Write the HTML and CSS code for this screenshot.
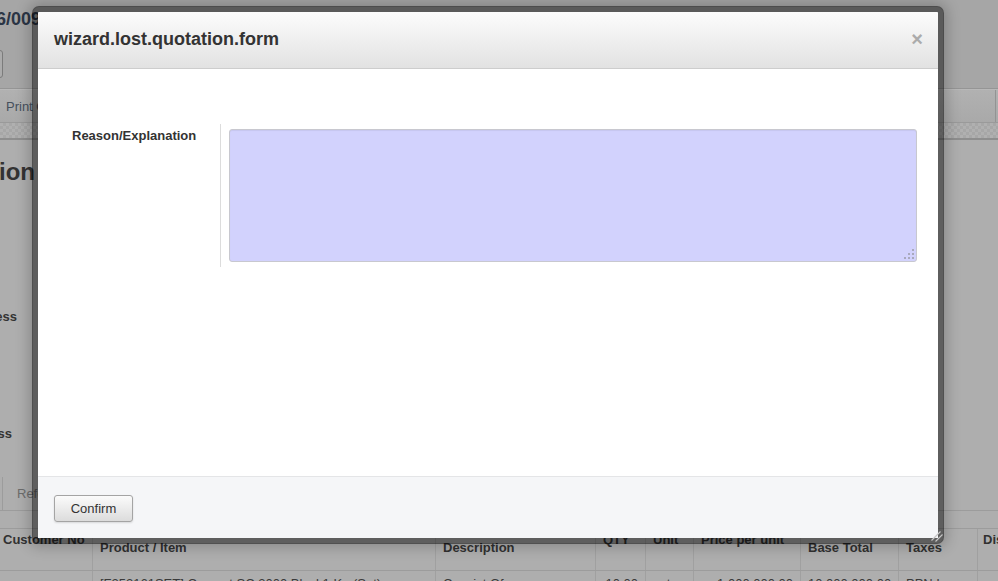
FILE: index.html
```html
<!DOCTYPE html>
<html>
<head>
<meta charset="utf-8">
<title>wizard.lost.quotation.form</title>
<link rel="stylesheet" href="styles.css">
</head>
<body>
<div class="page">
  <div class="topbar">
    <div class="crumb">6/0091</div>
    <div class="stub-btn"></div>
  </div>
  <div class="toolbar">
    <span class="tb-item">Print Quotation</span>
    <span class="tb-sep"></span>
  </div>
  <div class="stripe"></div>
  <div class="sheet">
    <div class="big-title">Quotation</div>
    <div class="field-lbl">Invoice Address</div>
    <div class="field-lbl second">Delivery Address</div>
    <div class="tabs">
      <div class="tab-active"></div>
      <div class="tab">Reference</div>
    </div>
    <div class="grid thead">
      <div class="th first">Customer No</div>
      <div class="th low">Product / Item</div>
      <div class="th low">Description</div>
      <div class="th">QTY</div>
      <div class="th">Unit</div>
      <div class="th">Price per unit</div>
      <div class="th low">Base Total</div>
      <div class="th low">Taxes</div>
      <div class="th last">Dis</div>
    </div>
    <div class="grid trow">
      <div class="td first"></div>
      <div class="td">[F252161SET] Cement SC 3000 Black1 Kg (Set)</div>
      <div class="td">Consist Of :</div>
      <div class="td num">10.00</div>
      <div class="td">set</div>
      <div class="td num">1,000,000.00</div>
      <div class="td num">10,000,000.00</div>
      <div class="td">PPN In</div>
      <div class="td"></div>
    </div>
  </div>
</div>

<div class="modal">
  <div class="m-header">
    <div class="m-title">wizard.lost.quotation.form</div>
    <div class="m-close">×</div>
  </div>
  <div class="m-body">
    <div class="form-row">
      <div class="f-label">Reason/Explanation</div>
      <div class="f-field">
        <div class="ta-wrap">
          <textarea class="ta"></textarea>
          <svg class="ta-grip" width="10" height="10" viewBox="0 0 10 10">
            <g fill="#a9a9bd">
              <rect x="8" y="0" width="2" height="2"/>
              <rect x="4" y="4" width="2" height="2"/>
              <rect x="8" y="4" width="2" height="2"/>
              <rect x="0" y="8" width="2" height="2"/>
              <rect x="4" y="8" width="2" height="2"/>
              <rect x="8" y="8" width="2" height="2"/>
            </g>
          </svg>
        </div>
      </div>
    </div>
  </div>
  <div class="m-footer">
    <button class="btn">Confirm</button>
  </div>
  <svg class="m-resize" width="12" height="12" viewBox="0 0 12 12">
    <path d="M0.5 10.5 L9.5 1.5 M4.5 11.5 L11.5 4.5" stroke="#c4c4c4" stroke-width="1.2" fill="none"/>
  </svg>
</div>
</body>
</html>
```

FILE: styles.css
```css
* { box-sizing: border-box; }

html, body {
  margin: 0;
  padding: 0;
}

body {
  width: 998px;
  height: 581px;
  overflow: hidden;
  position: relative;
  background: #acacac;
  font-family: "Liberation Sans", Arial, sans-serif;
  font-size: 13px;
  color: #2e2e2e;
}

/* ---------- dimmed page behind the dialog ---------- */
.topbar {
  height: 89px;
  padding-top: 8px;
  background: #a6a6a6;
  border-bottom: 1px solid #959595;
}

.crumb {
  margin-left: -4px;
  font-size: 18px;
  font-weight: bold;
  line-height: 22px;
  color: #2b3545;
  white-space: nowrap;
}

.stub-btn {
  margin-top: 20px;
  margin-left: -30px;
  width: 33px;
  height: 28px;
  border: 1px solid #7b7b7b;
  border-radius: 3px;
  background: #ababab;
}

.toolbar {
  height: 33px;
  display: flex;
  align-items: center;
  justify-content: space-between;
  padding-left: 6px;
  background: linear-gradient(#b1b1b1, #a9a9a9);
  border-top: 1px solid #b8b8b8;
  color: #46505c;
  white-space: nowrap;
}

.tb-sep {
  align-self: stretch;
  width: 3px;
  border-left: 1px solid #939393;
}

.stripe {
  height: 18px;
  border-top: 1px solid #9a9a9a;
  border-bottom: 2px solid #8e8e8e;
  background: repeating-conic-gradient(#a7a7a7 0 25%, #b0b0b0 0 50%) 0 0 / 6px 6px;
}

.sheet {
  padding-top: 18px;
  background: #aeaeae;
}

.big-title {
  display: flex;
  justify-content: flex-end;
  width: 35px;
  font-size: 24px;
  font-weight: bold;
  line-height: 28px;
  white-space: nowrap;
  color: #333;
}

.field-lbl {
  display: flex;
  justify-content: flex-end;
  width: 17px;
  margin-top: 122px;
  font-weight: bold;
  line-height: 18px;
  white-space: nowrap;
  color: #333;
}

.field-lbl.second {
  width: 12px;
  margin-top: 99px;
}

.tabs {
  margin-top: 34px;
  height: 34px;
  display: flex;
  border-bottom: 1px solid #9c9c9c;
}

.tab-active {
  width: 3px;
  border-right: 1px solid #9c9c9c;
}

.tab {
  display: flex;
  align-items: center;
  padding: 0 14px;
  color: #6c6c6c;
  white-space: nowrap;
}

.grid {
  display: grid;
  grid-template-columns: 92px 343px 160px 50px 48px 107px 98px 79px 60px;
}

.thead {
  margin-top: 17px;
  height: 43px;
  border-top: 1px solid #9c9c9c;
  border-bottom: 1px solid #9c9c9c;
  font-weight: bold;
  color: #313131;
}

.th, .td {
  border-left: 1px solid #a0a0a0;
  padding-left: 7px;
  line-height: 18px;
  white-space: nowrap;
  overflow: hidden;
}

.th { padding-top: 2px; }
.th.low { padding-top: 10px; }
.th.first, .td.first { border-left: none; padding-left: 3px; }
.th.last { padding-left: 5px; }

.trow {
  height: 30px;
  color: #3a3a3a;
}

.td { padding-top: 4px; padding-right: 7px; }
.td.num { text-align: right; }

/* ---------- dialog ---------- */
.modal {
  position: absolute;
  left: 32px;
  top: 6px;
  width: 912px;
  height: 538px;
  border: 6px solid rgba(0, 0, 0, 0.46);
  border-radius: 7px;
  background: #fff;
  background-clip: padding-box;
  box-shadow: 0 0 14px 3px rgba(0, 0, 0, 0.22);
  display: flex;
  flex-direction: column;
}

.m-header {
  height: 57px;
  padding: 16px 15px 0 16px;
  display: flex;
  justify-content: space-between;
  align-items: flex-start;
  background: linear-gradient(#fcfcfc, #e2e2e2);
  border-bottom: 1px solid #cdcdcd;
  border-radius: 2px 2px 0 0;
}

.m-title {
  font-size: 18px;
  font-weight: bold;
  line-height: 22px;
  color: #333;
}

.m-close {
  font-size: 20px;
  font-weight: bold;
  line-height: 22px;
  color: #ababab;
}

.m-body {
  flex: 1;
  padding-top: 55px;
}

.form-row {
  display: flex;
}

.f-label {
  width: 183px;
  padding-left: 34px;
  padding-top: 3px;
  border-right: 1px solid #dcdcdc;
  font-weight: bold;
  line-height: 18px;
  color: #333;
  white-space: nowrap;
}

.f-field {
  flex: 1;
  padding: 5px 21px 5px 8px;
}

.ta-wrap {
  position: relative;
  height: 133px;
}

.ta {
  display: block;
  width: 100%;
  height: 133px;
  margin: 0;
  padding: 2px 4px;
  background: #d2d2fd;
  border: 1px solid #c8c8cf;
  border-radius: 3px;
  resize: none;
  box-shadow: inset 0 1px 1px rgba(0, 0, 0, 0.06);
  font-family: "Liberation Sans", Arial, sans-serif;
  font-size: 13px;
}

.ta-grip {
  position: absolute;
  right: 3px;
  bottom: 3px;
}

.m-footer {
  height: 62px;
  padding: 18px 0 0 16px;
  background: #f5f6f8;
  border-top: 1px solid #e4e5e7;
}

.btn {
  display: block;
  width: 79px;
  height: 27px;
  margin: 0;
  padding: 0;
  border: 1px solid #a4a4a4;
  border-radius: 3px;
  background: linear-gradient(#fbfbfb, #dcdcdc);
  box-shadow: 0 1px 2px rgba(0, 0, 0, 0.12);
  font-family: "Liberation Sans", Arial, sans-serif;
  font-size: 13px;
  color: #333;
}

.m-resize {
  position: absolute;
  right: -5px;
  bottom: -4px;
}
```
